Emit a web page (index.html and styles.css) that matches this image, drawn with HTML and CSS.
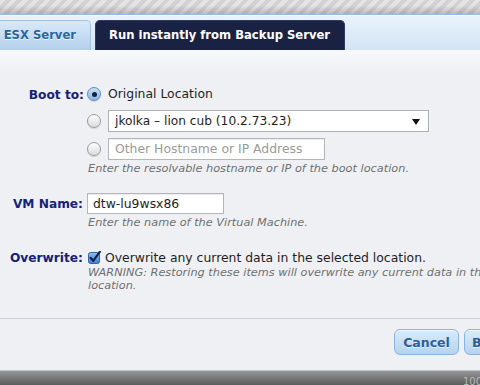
FILE: index.html
```html
<!DOCTYPE html>
<html lang="en">
<head>
  <meta charset="UTF-8">
  <title>Instant Restore</title>
  <link rel="stylesheet" href="styles.css">
</head>
<body>

<div class="top-band"></div>

<div class="dialog">
  <!-- Tabs -->
  <div class="tab-bar">
    <div class="tab tab-off">Restore to ESX Server</div>
    <div class="tab tab-on">Run instantly from Backup Server</div>
  </div>

  <!-- Form -->
  <div class="panel">
    <div class="form-row">
      <div class="label label-boot">Boot to:</div>
      <div class="field">
        <div class="option">
          <span class="radio checked"></span>
          <span class="option-text">Original Location</span>
        </div>
        <div class="option">
          <span class="radio"></span>
          <div class="select">
            <span>jkolka – lion cub (10.2.73.23)</span>
            <span class="arrow"></span>
          </div>
        </div>
        <div class="option">
          <span class="radio"></span>
          <div class="textbox host-box placeholder">Other Hostname or IP Address</div>
        </div>
        <div class="hint">Enter the resolvable hostname or IP of the boot location.</div>
      </div>
    </div>

    <div class="form-row row-vm">
      <div class="label label-vm">VM Name:</div>
      <div class="field">
        <div class="textbox vm-box">dtw-lu9wsx86</div>
        <div class="hint">Enter the name of the Virtual Machine.</div>
      </div>
    </div>

    <div class="form-row row-over">
      <div class="label label-over">Overwrite:</div>
      <div class="field">
        <div class="check-line">
          <svg class="checkbox" width="13" height="13" viewBox="0 0 13 13">
            <defs>
              <linearGradient id="cb" x1="0" y1="0" x2="0" y2="1">
                <stop offset="0" stop-color="#8fbdf0"/>
                <stop offset="1" stop-color="#3d80d6"/>
              </linearGradient>
            </defs>
            <rect x="0.5" y="1.5" width="11" height="11" rx="2" fill="url(#cb)" stroke="#3a62a0"/>
            <path d="M2.6 6.8 L5.2 9.8 L11.8 0.8" fill="none" stroke="#12224a" stroke-width="2.2" stroke-linecap="round" stroke-linejoin="round"/>
          </svg>
          <span>Overwrite any current data in the selected location.</span>
        </div>
        <div class="hint warn">WARNING: Restoring these items will overwrite any current data in the<br>location.</div>
      </div>
    </div>
  </div>

  <!-- Buttons -->
  <div class="buttons">
    <button class="btn">Cancel</button>
    <button class="btn btn-boot">Boot</button>
  </div>
</div>

<div class="bottom-band"><span class="zoom-level">100%</span></div>

</body>
</html>
```

FILE: styles.css
```css
body {
  margin: 0;
  width: 480px;
  height: 385px;
  overflow: hidden;
  font-family: "Lucida Grande", "DejaVu Sans", sans-serif;
  font-size: 12.4px;
  color: #1e1e1e;
  background: #6e6e6e;
}

.top-band {
  height: 14px;
  background:
    linear-gradient(rgba(0,0,0,0) 40%, rgba(0,0,0,0.18)),
    repeating-linear-gradient(135deg, #e4e4e4 0 4px, #d2d2d2 4px 8px);
}

.dialog {
  width: 536px;
  background: #eff0f4;
}

.tab-bar {
  height: 36px;
  box-sizing: border-box;
  border-top: 1px solid #95bde6;
  box-shadow: inset 0 1px 0 #f6faff;
  background: linear-gradient(#eaf3fb, #d3e4f3);
  display: flex;
  align-items: flex-end;
  gap: 4px;
}

.tab {
  height: 30px;
  box-sizing: border-box;
  border-radius: 5px 5px 0 0;
  font-weight: bold;
  font-size: 11.6px;
  line-height: 29px;
  white-space: nowrap;
}
.tab-off {
  width: 200px;
  margin-left: -109px;
  text-align: right;
  padding-right: 14px;
  color: #2a64a4;
  text-shadow: 0 1px 0 rgba(255,255,255,0.7);
  background: linear-gradient(#d9e9f7, #b3d0ec);
  border: 1px solid #a2c3e3;
  border-bottom: none;
}
.tab-on {
  padding: 0 14px 0 13px;
  color: #ffffff;
  background: #1a2244;
  border: 1px solid #2b3a6b;
  border-bottom: none;
}

.panel {
  padding: 33px 0 26px 0;
  border-bottom: 1px solid #cfd0d5;
  background: linear-gradient(#f8f9fb, #eff0f4 24px);
}

.form-row {
  display: grid;
  grid-template-columns: 84px 1fr;
  column-gap: 3px;
}
.label {
  text-align: right;
  font-weight: bold;
  font-size: 12.2px;
  color: #16207a;
}
.label-boot { line-height: 24px; }
.label-vm { line-height: 22px; margin-right: 1px; }
.label-over { line-height: 20px; margin-right: 1px; }

.option {
  display: flex;
  align-items: center;
  gap: 7px;
  height: 22px;
  margin-bottom: 6px;
}
.option:first-child { margin-bottom: 5px; }
.option-text { margin-top: -1px; }

.radio {
  width: 14px;
  height: 14px;
  box-sizing: border-box;
  border-radius: 50%;
  border: 1px solid #9b9b9b;
  background: linear-gradient(#fdfdfd, #dcdcdc);
  box-shadow: 0 1px 1px rgba(0,0,0,0.12);
  display: flex;
  align-items: center;
  justify-content: center;
}
.radio.checked {
  border-color: #5a8cc8;
  background: linear-gradient(#c9def5, #8db6e6);
}
.radio.checked::after {
  content: "";
  width: 5px;
  height: 5px;
  border-radius: 50%;
  background: #15203e;
}

.select {
  width: 321px;
  height: 22px;
  box-sizing: border-box;
  border: 1px solid #aeb0b4;
  background: #ffffff;
  display: flex;
  align-items: center;
  justify-content: space-between;
  padding: 0 8px 0 6px;
  font-size: 12.2px;
}
.arrow {
  width: 0;
  height: 0;
  border-left: 4px solid transparent;
  border-right: 4px solid transparent;
  border-top: 6px solid #111;
  margin-top: 1px;
}

.textbox {
  height: 22px;
  box-sizing: border-box;
  border: 1px solid #b4b6ba;
  box-shadow: inset 0 1px 1px rgba(0,0,0,0.08);
  background: #ffffff;
  padding: 0 6px;
  line-height: 20px;
  white-space: nowrap;
}
.host-box { width: 217px; }
.placeholder { color: #9a9a9a; }
.vm-box { width: 137px; height: 21px; line-height: 19px; padding-left: 5px; }

.hint {
  font-style: italic;
  font-size: 11.3px;
  line-height: 13px;
  color: #707070;
  margin-left: 1px;
  white-space: nowrap;
}
.option + .option + .option { margin-bottom: 2px; }

.row-vm { margin-top: 18px; }
.row-vm .hint { margin-top: 2px; }

.row-over { margin-top: 19px; }
.check-line {
  display: flex;
  align-items: center;
  gap: 4px;
  height: 18px;
  margin-left: 1px;
}
.checkbox { flex: none; }

.buttons {
  display: flex;
  justify-content: flex-end;
  gap: 5px;
  padding: 10px 12px 15px 0;
  border-bottom: 1px solid #c4c5c8;
}
.btn {
  height: 26px;
  box-sizing: border-box;
  border: 1px solid #8ab5e0;
  border-radius: 6px;
  background: linear-gradient(#dbebf9, #b5d3ef);
  box-shadow: inset 0 1px 0 rgba(255,255,255,0.6);
  color: #2a5e9c;
  font-family: "Lucida Grande", "DejaVu Sans", sans-serif;
  font-weight: bold;
  font-size: 12.5px;
  text-shadow: 0 1px 0 rgba(255,255,255,0.6);
  padding: 0 8px;
  width: 65px;
}
.btn-boot {
  width: 60px;
  text-align: left;
  padding-left: 7px;
}

.bottom-band {
  height: 14px;
  background: linear-gradient(#959595, #5c5c5c);
  position: relative;
}
.zoom-level {
  position: absolute;
  left: 463px;
  top: 5px;
  font-size: 10px;
  color: #b9b9b9;
}
```
